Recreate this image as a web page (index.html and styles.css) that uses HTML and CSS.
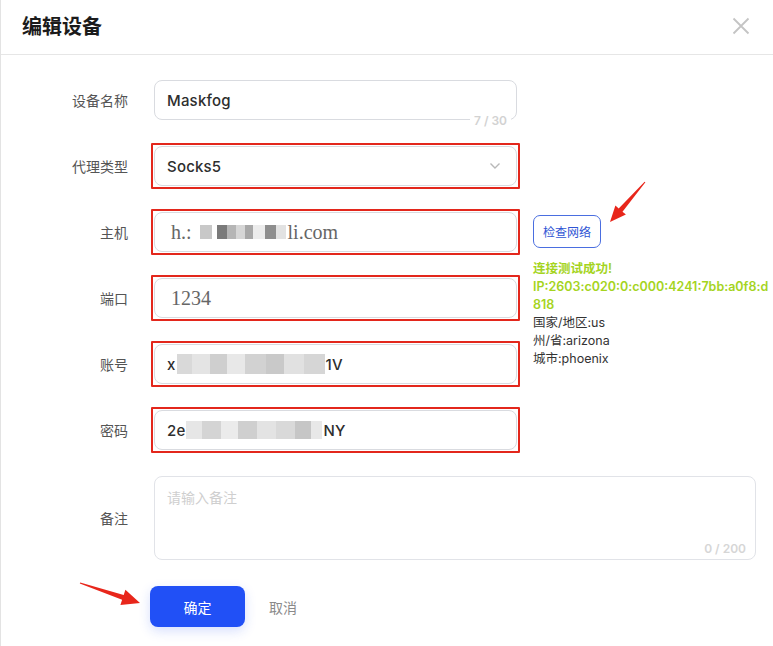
FILE: index.html
```html
<!DOCTYPE html>
<html lang="zh-CN">
<head>
<meta charset="utf-8">
<title>编辑设备</title>
<link rel="stylesheet" href="styles.css">
</head>
<body>
<div class="dialog">
  <header class="dialog-header">
    <h1 class="dialog-title">编辑设备</h1>
    <span class="close" aria-label="关闭">
      <svg width="18" height="18" viewBox="0 0 18 18"><path d="M1.5 1.5 L16.5 16.5 M16.5 1.5 L1.5 16.5" stroke="#c4c4c4" stroke-width="1.8" fill="none"/></svg>
    </span>
  </header>

  <form class="form">
    <label class="label">设备名称</label>
    <div class="field">
      <div class="input">Maskfog</div>
      <span class="count">7 / 30</span>
    </div>

    <label class="label">代理类型</label>
    <div class="field marked">
      <div class="input select">Socks5
        <svg class="chev" width="12" height="8" viewBox="0 0 12 8"><path d="M1.5 1.5 L6 6 L10.5 1.5" stroke="#b8b8b8" stroke-width="1.4" fill="none"/></svg>
      </div>
    </div>

    <label class="label">主机</label>
    <div class="field marked">
      <div class="input serif">h.:<span class="mosaic m-host"></span>li.com</div>
    </div>

    <div class="side">
      <button type="button" class="check-btn">检查网络</button>
      <div class="result">
        <div class="ok">连接测试成功!</div>
        <div class="ok">IP:2603:c020:0:c000:4241:7bb:a0f8:d<br>818</div>
        <div>国家/地区:us</div>
        <div>州/省:arizona</div>
        <div>城市:phoenix</div>
      </div>
    </div>

    <label class="label">端口</label>
    <div class="field marked">
      <div class="input serif">1234</div>
    </div>

    <label class="label">账号</label>
    <div class="field marked">
      <div class="input">x<span class="mosaic m-acc"></span>1V</div>
    </div>

    <label class="label">密码</label>
    <div class="field marked">
      <div class="input">2e<span class="mosaic m-pwd"></span>NY</div>
    </div>

    <label class="label label-area">备注</label>
    <div class="field area-field">
      <div class="textarea"><span class="placeholder">请输入备注</span><span class="count-in">0 / 200</span></div>
    </div>

    <div class="actions">
      <button type="button" class="btn-primary">确定</button>
      <button type="button" class="btn-text">取消</button>
    </div>
  </form>

  <svg class="annot" width="773" height="646" viewBox="0 0 773 646">
    <polygon fill="#e8261b" points="645.4,182.3 622.5,211.7 625.9,214.6 610,222 615.4,205.4 618.7,208.4 644.6,181.7"/>
    <polygon fill="#e8261b" points="79.8,583.5 122.1,599.7 120.4,604.9 140,603 125.4,589.7 123.7,594.9 80.2,582.5"/>
  </svg>
</div>
</body>
</html>
```
FILE: styles.css
```css
* { box-sizing: border-box; }
html, body { margin: 0; padding: 0; background: #fff; }
body {
  width: 773px;
  height: 646px;
  overflow: hidden;
  font-family: "Noto Sans CJK SC", "Inter", sans-serif;
}
.dialog {
  position: relative;
  width: 773px;
  height: 646px;
  border-left: 1px solid #e3e3e3;
}
.dialog-header {
  height: 55px;
  border-bottom: 1px solid #e6e6e6;
  display: flex;
  align-items: center;
  justify-content: space-between;
  padding: 0 23px 0 21px;
}
.dialog-title {
  margin: 0;
  font-size: 20px;
  font-weight: 700;
  color: #1b1b1b;
  line-height: 1;
  margin-top: -3px;
}
.close { display: flex; margin-top: -3px; }

.form {
  display: grid;
  grid-template-columns: 128px 363px 1fr;
  grid-template-rows: repeat(6, 40px) 84px 41px;
  column-gap: 25px;
  row-gap: 26px;
  padding-top: 25px;
}
.label {
  grid-column: 1;
  text-align: right;
  font-size: 14px;
  color: #555;
  line-height: 40px;
  padding-right: 1px;
}
.field {
  grid-column: 2;
  position: relative;
}
.input {
  height: 40px;
  border: 1px solid #d9dbe0;
  border-radius: 8px;
  padding: 0 12px;
  display: flex;
  align-items: center;
  font-family: "Inter", "Noto Sans CJK SC", sans-serif;
  font-size: 15px;
  font-weight: 500;
  color: #2e2e2e;
  letter-spacing: 0.2px;
}
.marked {
  margin: -3px -3px -3px -3px;
  padding: 1px;
  border: 2px solid #e3271c;
  border-radius: 1px;
  height: 46px;
}
.serif {
  font-family: "Liberation Serif", serif;
  font-size: 20px;
  font-weight: 400;
  color: #666;
  padding-left: 16px;
  letter-spacing: 0;
}
.select { justify-content: space-between; }
.chev { margin-right: 3px; }
.count {
  position: absolute;
  right: 6px;
  bottom: -8px;
  background: #fff;
  padding: 0 4px;
  font-family: "Inter", sans-serif;
  font-size: 12px;
  font-weight: 600;
  color: #d2d2d2;
  line-height: 14px;
}
.mosaic {
  display: inline-block;
  vertical-align: middle;
}
.m-host {
  width: 86px;
  height: 14px;
  margin: 0 2px 0 8px;
  background: linear-gradient(90deg, #c8c8c8 0 14%, #fff 14% 20%, #7a7a7a 20% 31%, #b5b5b5 31% 42%, #d6d6d6 42% 52%, #a8a8a8 52% 62%, #ececec 62% 76%, #8e8e8e 76% 88%, #e2e2e2 88%);
}
.m-acc {
  width: 148px;
  height: 20px;
  margin: 0 1px;
  background: linear-gradient(90deg, #d9d9d9 0 10%, #e4e4e4 10% 22%, #cfcfcf 22% 34%, #e8e8e8 34% 46%, #d2d2d2 46% 60%, #c9c9c9 60% 72%, #e1e1e1 72% 86%, #d6d6d6 86%);
}
.m-pwd {
  width: 136px;
  height: 18px;
  margin: 0 1px;
  background: linear-gradient(90deg, #e6e6e6 0 12%, #d4d4d4 12% 26%, #ebebeb 26% 38%, #cfcfcf 38% 52%, #e3e3e3 52% 66%, #d9d9d9 66% 80%, #c6c6c6 80% 92%, #e8e8e8 92%);
}

.side {
  grid-column: 3;
  grid-row: 3 / span 4;
  margin-left: -9px;
  padding-top: 3px;
}
.check-btn {
  width: 68px;
  height: 33px;
  border: 1px solid #4a6ee0;
  border-radius: 7px;
  background: #fff;
  color: #2f55d4;
  font-family: "Noto Sans CJK SC", sans-serif;
  font-size: 12px;
  padding: 0;
}
.result {
  margin-top: 12px;
  font-family: "Inter", "Noto Sans CJK SC", sans-serif;
  font-size: 12.5px;
  line-height: 18px;
  color: #333;
}
.ok {
  color: #a5d41e;
  font-weight: 600;
}

.label-area { grid-row: 7; line-height: 84px; }
.area-field { grid-row: 7; grid-column: 2 / span 2; width: 602px; }
.textarea {
  position: relative;
  height: 84px;
  border: 1px solid #e1e3e8;
  border-radius: 8px;
  padding: 7px 12px;
}
.placeholder { font-size: 14px; color: #cfcfcf; }
.count-in {
  position: absolute;
  right: 9px;
  bottom: 3px;
  font-family: "Inter", sans-serif;
  font-size: 12px;
  font-weight: 600;
  color: #d6d6d6;
}

.actions {
  grid-row: 8;
  grid-column: 2;
  display: flex;
  align-items: center;
  gap: 24px;
  margin-left: -4px;
}
.btn-primary {
  width: 95px;
  height: 41px;
  border: none;
  border-radius: 8px;
  background: #2150f6;
  color: #fff;
  font-family: "Noto Sans CJK SC", sans-serif;
  font-size: 14px;
  box-shadow: 0 4px 12px rgba(33, 80, 246, 0.18);
}
.btn-text {
  border: none;
  background: none;
  padding: 0;
  font-family: "Noto Sans CJK SC", sans-serif;
  font-size: 14px;
  color: #8a8a8a;
}

.annot {
  position: absolute;
  left: -1px;
  top: 0;
  pointer-events: none;
}
```
